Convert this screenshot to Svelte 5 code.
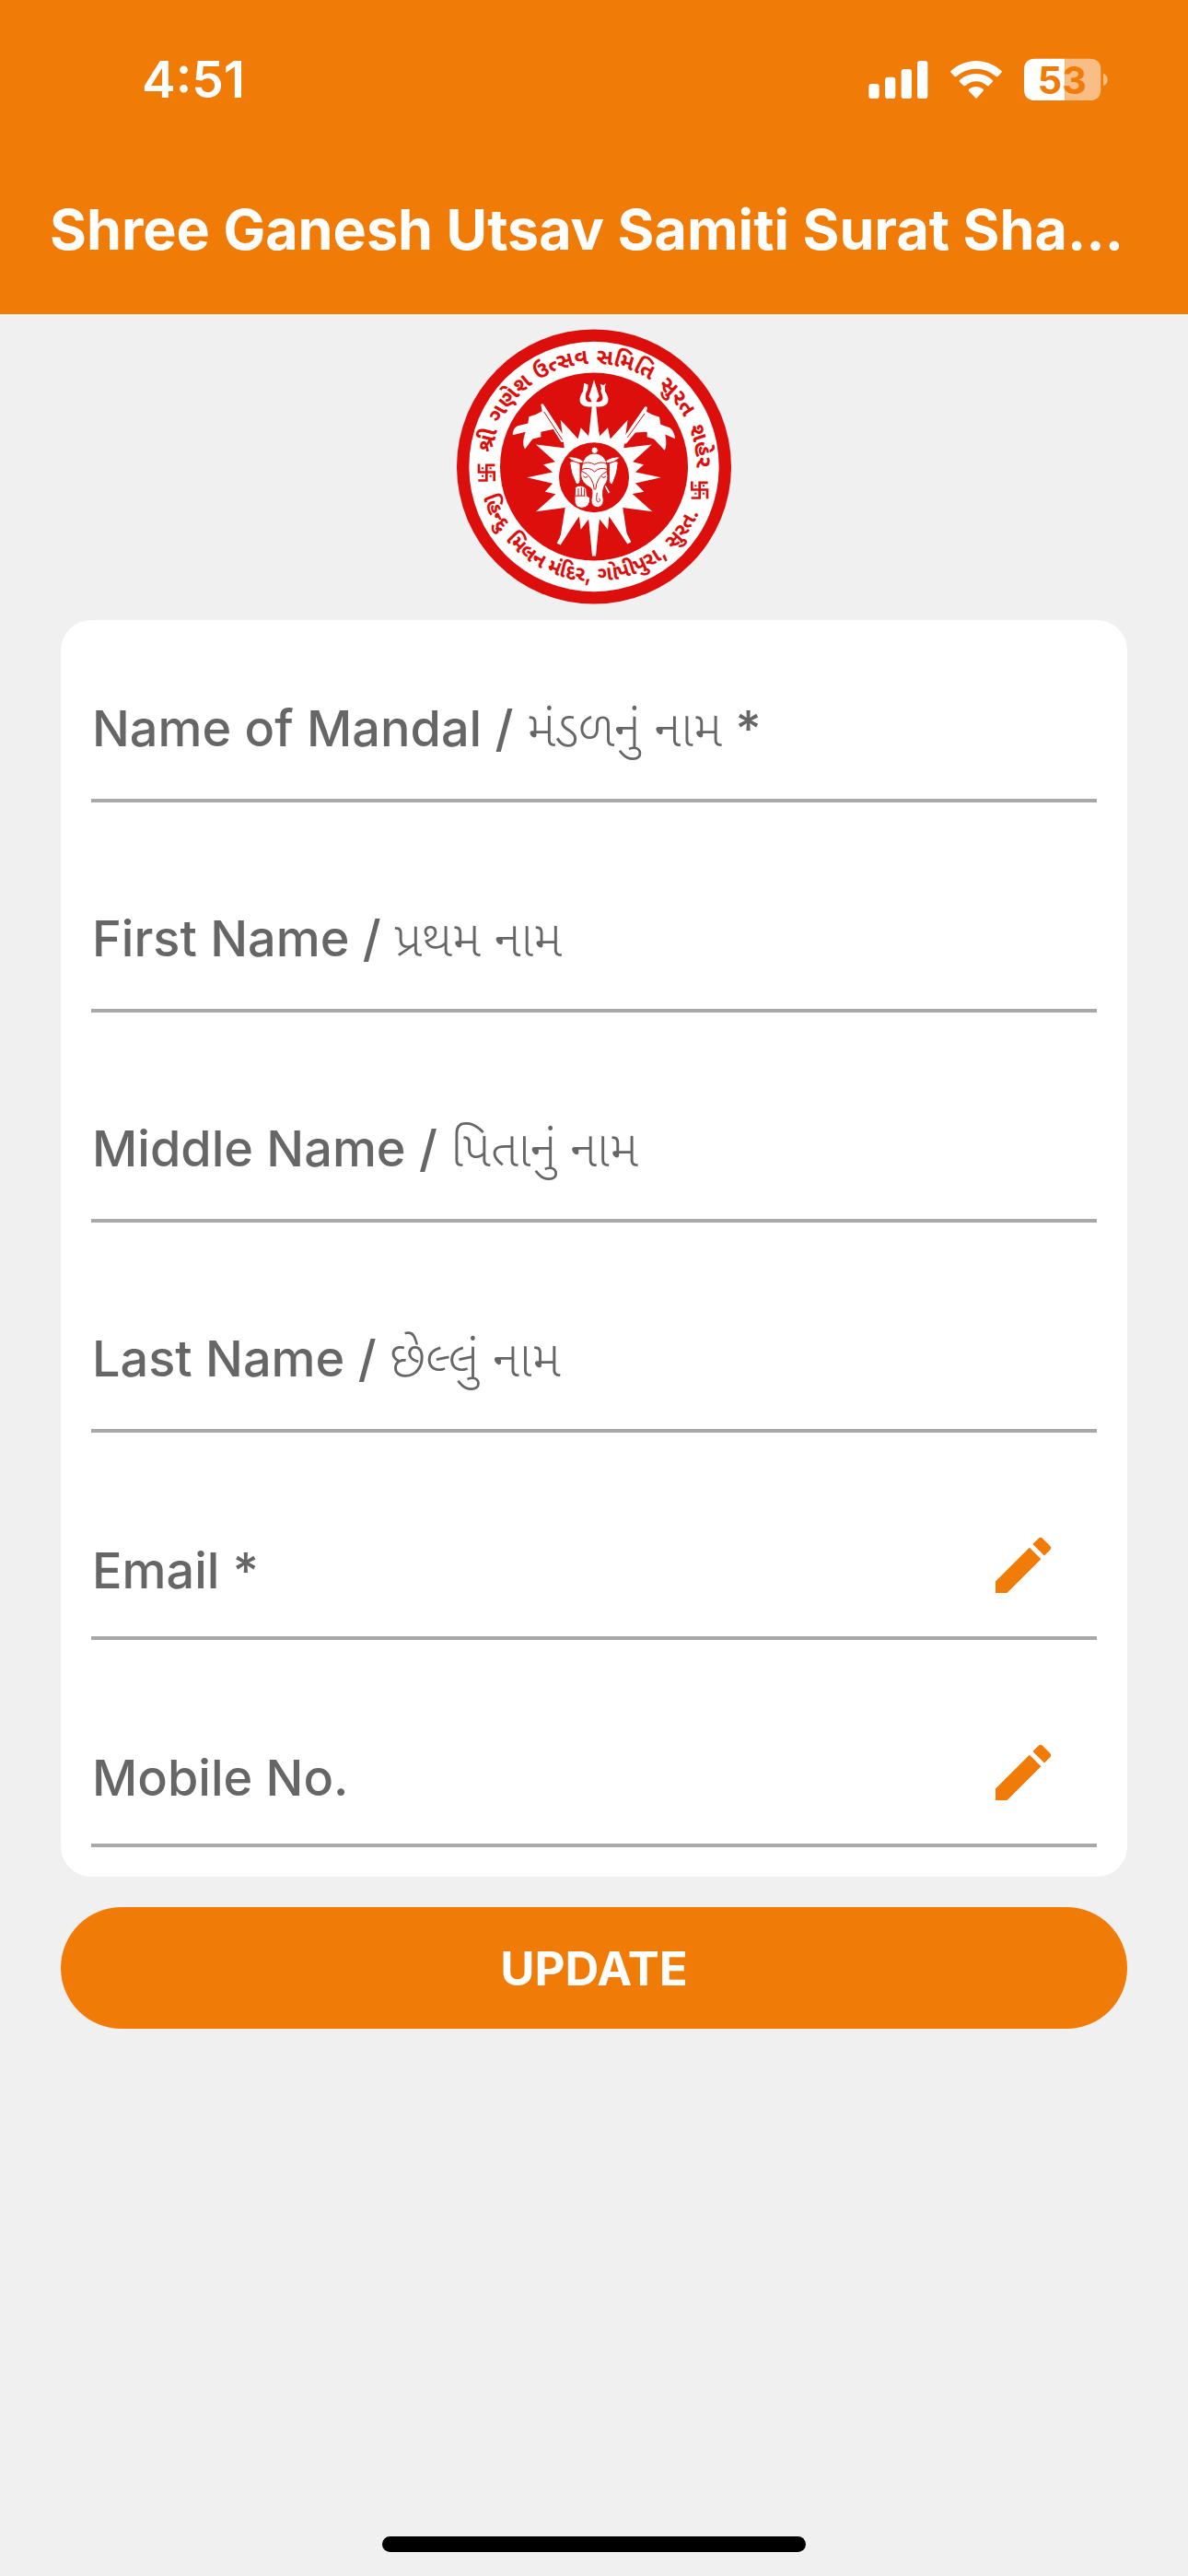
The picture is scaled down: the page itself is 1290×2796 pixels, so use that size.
<script lang="ts">
  const fields = [
    { id: "mandal", latin: "Name of Mandal /", local: "મંડળનું નામ", mark: "*", type: "text", edit: false },
    { id: "first", latin: "First Name /", local: "પ્રથમ નામ", mark: "", type: "text", edit: false },
    { id: "middle", latin: "Middle Name /", local: "પિતાનું નામ", mark: "", type: "text", edit: false },
    { id: "last", latin: "Last Name /", local: "છેલ્લું નામ", mark: "", type: "text", edit: false },
    { id: "email", latin: "Email", local: "", mark: "*", type: "email", edit: true },
    { id: "mobile", latin: "Mobile No.", local: "", mark: "", type: "tel", edit: true },
  ];

  let values = $state(fields.map(() => ""));

  // Words on the ring: degrees from 12 o'clock for the top, from 6 o'clock for the bottom
  const top_words = [
    { text: "શ્રી", angle: -76 },
    { text: "ગણેશ", angle: -51 },
    { text: "ઉત્સવ", angle: -18 },
    { text: "સમિતિ", angle: 17 },
    { text: "સુરત", angle: 50 },
    { text: "શહેર", angle: 79 },
  ];
  const bottom_words = [
    { text: "હિન્દુ", angle: -65 },
    { text: "મિલન", angle: -39 },
    { text: "મંદિર,", angle: -13 },
    { text: "ગોપીપુરા,", angle: 21 },
    { text: "સુરત.", angle: 55 },
  ];

  function offset(angle: number): string {
    return `${((180 + angle) / 360) * 100}%`;
  }

  // Tips of the sun's rays, clockwise from the trident
  const SUN = { x: 495, y: 520, r: 136 };
  const tips = [
    [495, 300], [540, 358], [605, 333], [683, 413], [657, 478], [713, 520], [658, 567],
    [685, 631], [606, 732], [540, 690], [495, 776], [452, 690], [382, 735], [306, 631],
    [335, 567], [277, 520], [330, 478], [306, 413], [386, 333], [452, 358],
  ];

  function sun_path(): string {
    const angles = tips.map(([x, y]) => Math.atan2(y - SUN.y, x - SUN.x));
    const points = tips.map(([x, y], i) => {
      let next = angles[(i + 1) % angles.length];
      if (next < angles[i]) next += Math.PI * 2;
      const mid = (angles[i] + next) / 2;
      const vx = SUN.x + SUN.r * Math.cos(mid);
      const vy = SUN.y + SUN.r * Math.sin(mid);
      return `${x},${y} ${vx.toFixed(1)},${vy.toFixed(1)}`;
    });
    return `M${points.join(" ")}Z`;
  }
</script>

<div class="screen">
  <header>
    <div class="status">
      <span class="time">4:51</span>
      <svg class="indicators" viewBox="130 60 780 150" aria-hidden="true">
        <g fill="#fff">
          <rect x="131" y="150" width="34" height="48" rx="10" />
          <rect x="184" y="128" width="34" height="70" rx="10" />
          <rect x="237" y="102" width="34" height="96" rx="10" />
          <rect x="289" y="75" width="34" height="123" rx="10" />
          <path d="M399 107Q436 75 481 75Q526 75 563 107Q566 110 563 113L552 125Q548 128 545 125Q517 101 481 101Q445 101 417 125Q414 128 410 125L399 113Q396 110 399 107Z" />
          <path d="M427 138Q450 117 481 117Q512 117 534 138Q537 141 534 144L522 156Q519 158 516 156Q501 142 481 142Q461 142 446 156Q443 158 440 156L427 144Q425 141 427 138Z" />
          <path d="M457 167Q467 159 481 159Q494 159 504 167Q506 170 504 173L484 195Q481 199 478 195L457 173Q455 170 457 167Z" />
          <path d="M674 68H770V204H674Q637 204 637 167V105Q637 68 674 68Z" />
        </g>
        <g fill="#f9be86">
          <path d="M770 68H850Q887 68 887 105V167Q887 204 850 204H770Z" />
          <path d="M895 116Q909 122 909 136Q909 151 895 157Z" />
        </g>
        <text class="level" x="761" y="183" text-anchor="middle">53</text>
      </svg>
    </div>
    <h1>Shree Ganesh Utsav Samiti Surat Sha…</h1>
  </header>

  <main>
    <svg class="logo" viewBox="48 37 894 896" role="img" aria-label="Shree Ganesh Utsav Samiti">
      <defs>
        <path id="ring-top" d="M495 819A334 334 0 0 1 495 151A334 334 0 0 1 495 819" />
        <path id="ring-bottom" d="M495 111A374 374 0 0 0 495 859A374 374 0 0 0 495 111" />
      </defs>
      <circle cx="495" cy="485" r="447" fill="#dc0f0d" />
      <circle cx="495" cy="485" r="407" fill="#fff" />
      <circle cx="495" cy="485" r="306" fill="#dc0f0d" />
      {#each top_words as w}
        <text class="ring"><textPath href="#ring-top" startOffset={offset(w.angle)}>{w.text}</textPath></text>
      {/each}
      {#each bottom_words as w}
        <text class="ring bottom"><textPath href="#ring-bottom" startOffset={offset(w.angle)}>{w.text}</textPath></text>
      {/each}
      <g fill="none" stroke="#dc0f0d" stroke-width="8">
        <path id="swastik" d="M172 480H145V530H118M120 476V503H170V532" />
        <use href="#swastik" x="694" y="57" />
      </g>
      <g fill="#dc0f0d">
        <path id="dots" d="M129 487h6v6h-6zM155 487h6v6h-6zM129 513h6v6h-6zM155 513h6v6h-6z" />
        <use href="#dots" x="694" y="57" />
      </g>

      <path d={sun_path()} fill="#fff" />
      <path d="M374 735L420 640H450L386 740ZM616 730L570 640H540L604 737ZM489 776L476 640H514L501 776Z" fill="#fff" />
      <circle cx="495" cy="520" r="114" fill="#dc0f0d" />

      <g fill="#fff">
        <path d="M495 202Q507 240 512 256Q506 264 502 274H512Q527 272 522 252Q515 240 519 231L515 216Q528 224 534 213Q528 226 531 240Q546 262 539 278Q530 290 512 290H502L514 405H476L488 290H478Q460 290 451 278Q444 262 459 240Q462 226 462 213L475 217Q478 229 469 245Q463 272 478 274H488Q484 264 478 256Q484 240 495 202Z" />
        <path d="M322 283Q326 278 331 283L410 405H388L334 318L368 362L322 372V388L295 395L270 428Q258 410 272 372L230 382Q230 360 246 352L280 344L283 322Q308 316 326 304Z" />
        <path d="M669 292Q664 287 659 292L578 410H600L630 374L668 372L668 388L690 395L725 432Q734 416 727 380L759 394Q757 370 742 358L712 348L708 324Q684 318 666 306Z" />
      </g>
      <path d="M332 306L392 398M660 312L604 390" stroke="#dc0f0d" stroke-width="3" />

      <g fill="#fff" stroke="#dc0f0d" stroke-width="3">
        <path d="M416 470Q430 462 450 476V530Q446 548 436 540Q418 505 416 470Z" />
        <path d="M574 470Q560 462 544 476V530Q548 548 556 540Q572 505 574 470Z" />
        <path d="M410 454Q436 450 460 466V474Q430 474 410 454Z" />
        <path d="M580 454Q556 450 532 466V474Q562 474 580 454Z" />
        <path d="M434 552Q452 540 470 556L472 580L482 586Q484 618 454 620Q430 618 432 590Z" />
        <path d="M456 482Q460 446 497 440Q534 446 538 482V505Q544 528 530 545Q522 558 524 580Q532 612 508 618Q484 616 486 592Q492 566 486 556Q450 535 452 510Z" />
        <circle cx="497" cy="432" r="11" />
        <path d="M528 548L541 574L548 568L534 545Z" />
      </g>
      <g fill="none" stroke="#dc0f0d" stroke-width="3">
        <path d="M458 476Q476 466 497 478Q518 466 536 476M456 494Q480 484 497 502Q514 484 538 494M456 500Q492 515 496 560M538 500Q504 515 500 560M460 516Q466 524 474 518M520 518Q528 524 534 516" />
        <path d="M434 580H466M444 556V580M454 552V580M464 556V580M505 570Q500 600 508 600Q518 598 512 588M536 575V604" />
      </g>
    </svg>

    <form onsubmit={(e) => e.preventDefault()}>
      <div class="card">
        {#each fields as f, i}
          <div class="field" class:editable={f.edit}>
            <label for={f.id}>
              {f.latin}
              {#if f.local}<span class="local" lang="gu">{f.local}</span>{/if}
              {f.mark}
            </label>
            <input id={f.id} type={f.type} bind:value={values[i]} />
            {#if f.edit}
              <button type="button" class="edit" aria-label="Edit">
                <svg viewBox="0 0 24 24">
                  <path d="M3 17.25V21h3.75L17.81 9.94l-3.75-3.75L3 17.25zM20.71 7.04a1 1 0 0 0 0-1.41l-2.34-2.34a1 1 0 0 0-1.41 0l-1.83 1.83 3.75 3.75 1.83-1.83z" />
                </svg>
              </button>
            {/if}
          </div>
        {/each}
      </div>
      <button type="submit" class="update">UPDATE</button>
    </form>
  </main>

  <div class="home"></div>
</div>

<style>
  :global(body) {
    background: #f0f0f0;
  }

  .screen {
    display: flex;
    flex-direction: column;
    min-height: 100vh;
    font-family: Inter, "Noto Sans Gujarati", "Noto Sans", sans-serif;
  }

  header {
    background: #f17b07;
    color: #fff;
    padding: 52px 54px 56px;
  }

  .status {
    display: flex;
    align-items: center;
    justify-content: space-between;
    height: 68px;
    padding: 0 33px 0 100px;
  }

  .time {
    font-size: 55px;
    font-weight: 600;
  }

  .indicators {
    width: 260px;
    height: 50px;
  }

  .level {
    fill: #f17b07;
    font-size: 124px;
    font-weight: 700;
  }

  h1 {
    margin: 93px 0 0;
    font-size: 61px;
    font-weight: 700;
    line-height: 72px;
    white-space: nowrap;
  }

  main {
    display: flex;
    flex-direction: column;
    padding: 16px 66px 0;
  }

  .logo {
    align-self: center;
    width: 298px;
    height: 299px;
  }

  .ring {
    fill: #dc0f0d;
    font-size: 72px;
    font-weight: 700;
    text-anchor: middle;
  }

  .ring.bottom {
    font-size: 68px;
  }

  form {
    display: flex;
    flex-direction: column;
    gap: 33px;
    margin-top: 17px;
  }

  .card {
    display: flex;
    flex-direction: column;
    gap: 64px;
    padding: 34px 33px 32px;
    border-radius: 33px;
    background: #fff;
  }

  /* the label sits in the same cell as its input, as a resting placeholder */
  .field {
    display: grid;
    grid-template-columns: 1fr auto;
    align-items: center;
    box-sizing: border-box;
    height: 164px;
    border-bottom: 4px solid #a8a8a8;
  }

  .field.editable {
    height: 161px;
  }

  label,
  input {
    grid-area: 1 / 1;
    font-size: 54px;
  }

  label {
    padding: 8px 0 0 1px;
    color: #666;
    font-weight: 500;
    line-height: 64px;
    white-space: nowrap;
  }

  .editable label {
    padding-top: 14px;
  }

  .local {
    font-weight: 300;
  }

  input {
    width: 100%;
    height: 100%;
    box-sizing: border-box;
    padding: 0;
    border: 0;
    outline: 0;
    background: none;
    color: #222;
    font-family: inherit;
  }

  .edit {
    padding: 2px 40px 0;
    border: 0;
    background: none;
  }

  .edit svg {
    display: block;
    width: 80px;
    height: 80px;
    fill: #f17b07;
  }

  .update {
    height: 132px;
    border: 0;
    border-radius: 66px;
    background: #f17b07;
    color: #fff;
    font-family: inherit;
    font-size: 51px;
    font-weight: 700;
  }

  .home {
    align-self: center;
    width: 460px;
    height: 17px;
    margin: auto 0 26px;
    border-radius: 9px;
    background: #000;
  }
</style>
